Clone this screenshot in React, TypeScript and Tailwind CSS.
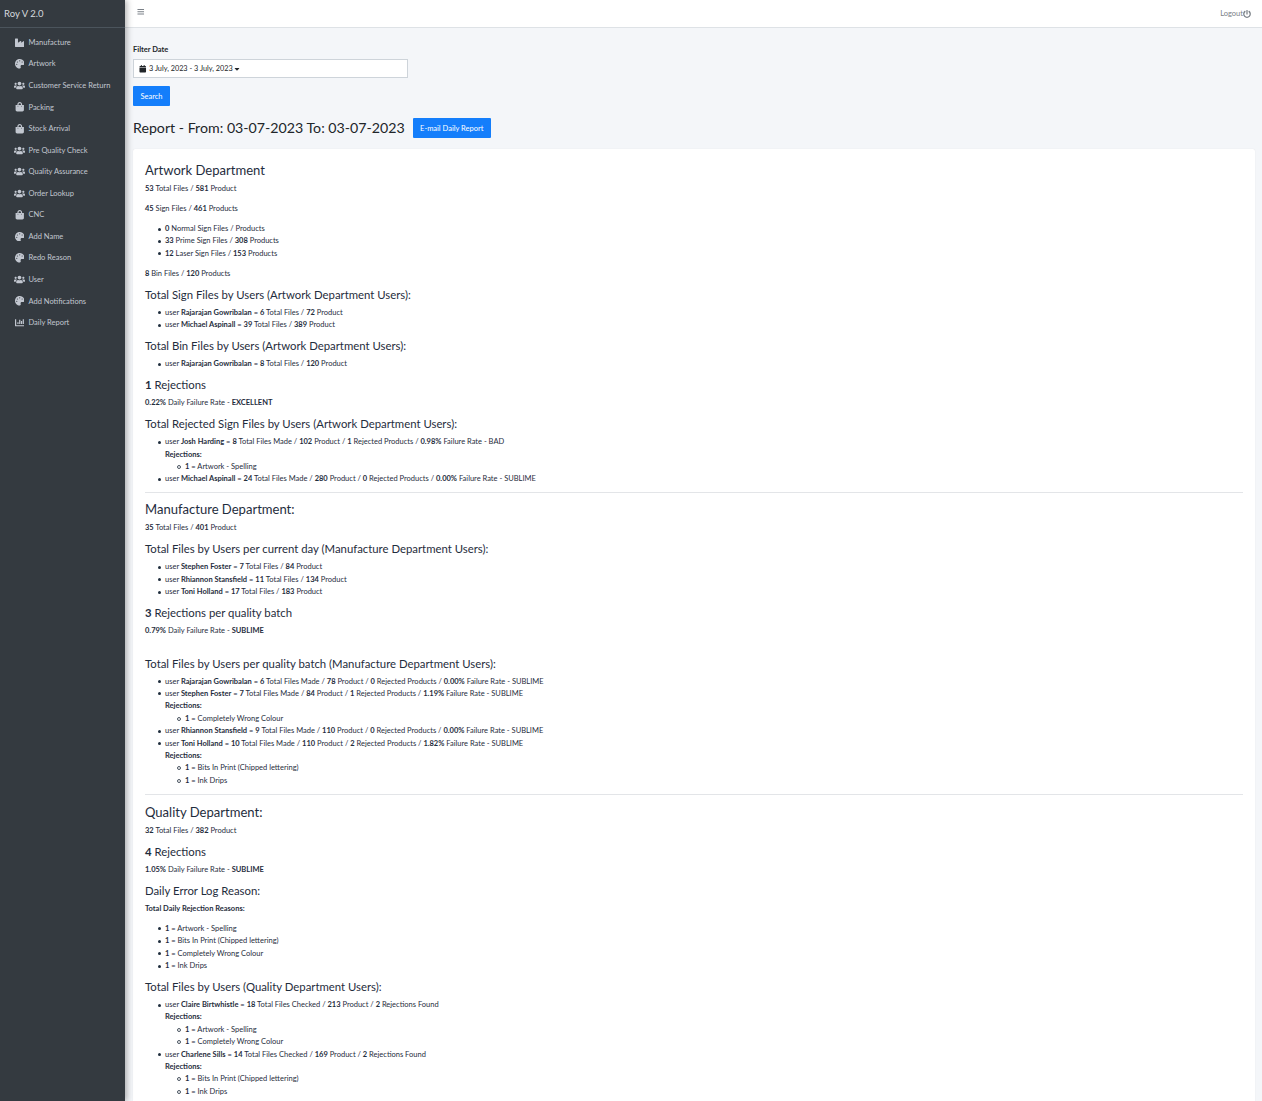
import React from 'react';
import {
    FaBars,
    FaCalendar,
    FaCaretDown,
    FaChartBar,
    FaIndustry,
    FaPalette,
    FaPowerOff,
    FaShoppingBag,
    FaUsers
} from 'react-icons/fa';

const navItems = [
    { label: 'Manufacture', icon: FaIndustry, size: 'text-[9.5px]' },
    { label: 'Artwork', icon: FaPalette, size: 'text-[9.5px]' },
    { label: 'Customer Service Return', icon: FaUsers, size: 'text-[11px]' },
    { label: 'Packing', icon: FaShoppingBag, size: 'text-[9.5px]' },
    { label: 'Stock Arrival', icon: FaShoppingBag, size: 'text-[9.5px]' },
    { label: 'Pre Quality Check', icon: FaUsers, size: 'text-[11px]' },
    { label: 'Quality Assurance', icon: FaUsers, size: 'text-[11px]' },
    { label: 'Order Lookup', icon: FaUsers, size: 'text-[11px]' },
    { label: 'CNC', icon: FaShoppingBag, size: 'text-[9.5px]' },
    { label: 'Add Name', icon: FaPalette, size: 'text-[9.5px]' },
    { label: 'Redo Reason', icon: FaPalette, size: 'text-[9.5px]' },
    { label: 'User', icon: FaUsers, size: 'text-[11px]' },
    { label: 'Add Notifications', icon: FaPalette, size: 'text-[9.5px]' },
    { label: 'Daily Report', icon: FaChartBar, size: 'text-[9.5px]' }
];

const H4 = ({ children }: { children: React.ReactNode }) => (
    <h4 className="-mt-[1px] mb-[4px] text-[13.05px] leading-[18px]">{children}</h4>
);
const H5 = ({ children }: { children: React.ReactNode }) => (
    <h5 className="-mt-[1px] mb-[4px] text-[11.35px] leading-[16px]">{children}</h5>
);
const P = ({ children }: { children: React.ReactNode }) => (
    <p className="mb-[7.6px] leading-[12.4px]">{children}</p>
);
const Ul = ({ children }: { children: React.ReactNode }) => (
    <ul className="mb-[7.6px] list-none pl-[20px] leading-[12.4px] [&>li]:relative [&>li]:before:absolute [&>li]:before:left-[-7px] [&>li]:before:top-[4.5px] [&>li]:before:size-[3px] [&>li]:before:rounded-full [&>li]:before:bg-[#1f2d3d] [&>li]:before:content-['']">
        {children}
    </ul>
);
const Sub = ({ items }: { items: string[] }) => (
    <>
        <div className="font-bold">Rejections:</div>
        <ul className="list-none pl-[20px] [&>li]:relative [&>li]:before:absolute [&>li]:before:left-[-8px] [&>li]:before:top-[4px] [&>li]:before:size-[4px] [&>li]:before:rounded-full [&>li]:before:border-[0.75px] [&>li]:before:border-[#4a5561] [&>li]:before:content-['']">
            {items.map((item) => (
                <li key={item}>
                    <b>1</b> = {item}
                </li>
            ))}
        </ul>
    </>
);

const App: React.FC = () => {
    return (
        <div className="flex h-screen overflow-hidden bg-[#f4f6f9] font-['Lato','Liberation_Sans',sans-serif] text-[#212529]">
            <aside className="z-10 w-[125px] shrink-0 bg-[#343a40] text-[#c2c7d0] shadow-[2px_0_6px_rgba(0,0,0,0.3)]">
                <div className="h-[28px] border-b border-[#4b545c] pl-[4px] pt-[7px] text-[9.5px] leading-[13px] text-[#d5d9de]">
                    Roy V 2.0
                </div>
                <nav className="pt-[3.8px]">
                    {navItems.map(({ label, icon: Icon, size }) => (
                        <div key={label} className="flex h-[21.55px] items-center pl-[11px] text-[7.5px]">
                            <span className={`flex w-[17.5px] justify-center pr-[1px] ${size}`}>
                                <Icon />
                            </span>
                            <span className="whitespace-nowrap">{label}</span>
                        </div>
                    ))}
                </nav>
            </aside>
            <div className="min-w-0 flex-1">
                <header className="flex h-[28px] items-start justify-between border-b border-[#dee2e6] bg-white pl-[12px] pr-[11px] text-[#7a8087]">
                    <FaBars className="mt-[8px] text-[7.5px]" />
                    <div className="mt-[9px] flex items-center text-[7.5px] leading-[10px]">
                        Logout
                        <FaPowerOff className="text-[8px]" />
                    </div>
                </header>
                <main className="pl-[8px] pr-[7px] text-[7.5px]">
                    <label className="mb-[4px] mt-[16px] block font-bold leading-[11px]">Filter Date</label>
                    <div className="flex h-[19px] w-[275px] items-center border border-[#ced4da] bg-white pl-[5px] pt-[1px] text-[7.3px]">
                        <FaCalendar className="mr-[2.5px] text-[7.5px]" />
                        3 July, 2023 - 3 July, 2023
                        <FaCaretDown className="text-[8px]" />
                    </div>
                    <button className="mt-[8px] block h-[20px] w-[37px] rounded-[1px] bg-[#147efb] pt-[1px] text-white">Search</button>
                    <div className="mb-[11px] mt-[12px] flex h-[20px] items-center">
                        <h3 className="text-[14.2px] leading-[20px]">Report - From: 03-07-2023 To: 03-07-2023</h3>
                        <button className="ml-[8px] h-[20px] w-[78px] rounded-[1px] bg-[#147efb] pt-[1px] text-white">
                            E-mail Daily Report
                        </button>
                    </div>
                    <section className="rounded-[2px] bg-white px-[12px] pb-[40px] pt-[13px] text-[#1f2d3d] shadow-[0_0_1px_rgba(0,0,0,0.13)]">
                        <H4>Artwork Department</H4>
                        <P><b>53</b> Total Files / <b>581</b> Product</P>
                        <P><b>45</b> Sign Files / <b>461</b> Products</P>
                        <Ul>
                            <li><b>0</b> Normal Sign Files / Products</li>
                            <li><b>33</b> Prime Sign Files / <b>308</b> Products</li>
                            <li><b>12</b> Laser Sign Files / <b>153</b> Products</li>
                        </Ul>
                        <P><b>8</b> Bin Files / <b>120</b> Products</P>
                        <H5>Total Sign Files by Users (Artwork Department Users):</H5>
                        <Ul>
                            <li>user <b>Rajarajan Gowribalan</b> = <b>6</b> Total Files / <b>72</b> Product</li>
                            <li>user <b>Michael Aspinall</b> = <b>39</b> Total Files / <b>389</b> Product</li>
                        </Ul>
                        <H5>Total Bin Files by Users (Artwork Department Users):</H5>
                        <Ul>
                            <li>user <b>Rajarajan Gowribalan</b> = <b>8</b> Total Files / <b>120</b> Product</li>
                        </Ul>
                        <H5><b>1</b> Rejections</H5>
                        <P><b>0.22%</b> Daily Failure Rate - <b>EXCELLENT</b></P>
                        <H5>Total Rejected Sign Files by Users (Artwork Department Users):</H5>
                        <Ul>
                            <li>
                                user <b>Josh Harding</b> = <b>8</b> Total Files Made / <b>102</b> Product / <b>1</b> Rejected Products / <b>0.98%</b> Failure Rate - BAD
                                <Sub items={['Artwork - Spelling']} />
                            </li>
                            <li>user <b>Michael Aspinall</b> = <b>24</b> Total Files Made / <b>280</b> Product / <b>0</b> Rejected Products / <b>0.00%</b> Failure Rate - SUBLIME</li>
                        </Ul>
                        <hr className="-mt-[1px] mb-[8px] border-[#e3e5e8]" />
                        <H4>Manufacture Department:</H4>
                        <P><b>35</b> Total Files / <b>401</b> Product</P>
                        <H5>Total Files by Users per current day (Manufacture Department Users):</H5>
                        <Ul>
                            <li>user <b>Stephen Foster</b> = <b>7</b> Total Files / <b>84</b> Product</li>
                            <li>user <b>Rhiannon Stansfield</b> = <b>11</b> Total Files / <b>134</b> Product</li>
                            <li>user <b>Toni Holland</b> = <b>17</b> Total Files / <b>183</b> Product</li>
                        </Ul>
                        <H5><b>3</b> Rejections per quality batch</H5>
                        <P><b>0.79%</b> Daily Failure Rate - <b>SUBLIME</b></P>
                        <div className="h-[11.3px]" />
                        <H5>Total Files by Users per quality batch (Manufacture Department Users):</H5>
                        <Ul>
                            <li>user <b>Rajarajan Gowribalan</b> = <b>6</b> Total Files Made / <b>78</b> Product / <b>0</b> Rejected Products / <b>0.00%</b> Failure Rate - SUBLIME</li>
                            <li>
                                user <b>Stephen Foster</b> = <b>7</b> Total Files Made / <b>84</b> Product / <b>1</b> Rejected Products / <b>1.19%</b> Failure Rate - SUBLIME
                                <Sub items={['Completely Wrong Colour']} />
                            </li>
                            <li>user <b>Rhiannon Stansfield</b> = <b>9</b> Total Files Made / <b>110</b> Product / <b>0</b> Rejected Products / <b>0.00%</b> Failure Rate - SUBLIME</li>
                            <li>
                                user <b>Toni Holland</b> = <b>10</b> Total Files Made / <b>110</b> Product / <b>2</b> Rejected Products / <b>1.82%</b> Failure Rate - SUBLIME
                                <Sub items={['Bits In Print (Chipped lettering)', 'Ink Drips']} />
                            </li>
                        </Ul>
                        <hr className="-mt-[1px] mb-[9px] border-[#e3e5e8]" />
                        <H4>Quality Department:</H4>
                        <P><b>32</b> Total Files / <b>382</b> Product</P>
                        <H5><b>4</b> Rejections</H5>
                        <P><b>1.05%</b> Daily Failure Rate - <b>SUBLIME</b></P>
                        <H5>Daily Error Log Reason:</H5>
                        <P><b>Total Daily Rejection Reasons:</b></P>
                        <Ul>
                            <li><b>1</b> = Artwork - Spelling</li>
                            <li><b>1</b> = Bits In Print (Chipped lettering)</li>
                            <li><b>1</b> = Completely Wrong Colour</li>
                            <li><b>1</b> = Ink Drips</li>
                        </Ul>
                        <H5>Total Files by Users (Quality Department Users):</H5>
                        <Ul>
                            <li>
                                user <b>Claire Birtwhistle</b> = <b>18</b> Total Files Checked / <b>213</b> Product / <b>2</b> Rejections Found
                                <Sub items={['Artwork - Spelling', 'Completely Wrong Colour']} />
                            </li>
                            <li>
                                user <b>Charlene Sills</b> = <b>14</b> Total Files Checked / <b>169</b> Product / <b>2</b> Rejections Found
                                <Sub items={['Bits In Print (Chipped lettering)', 'Ink Drips']} />
                            </li>
                        </Ul>
                    </section>
                </main>
            </div>
        </div>
    );
};

export default App;
